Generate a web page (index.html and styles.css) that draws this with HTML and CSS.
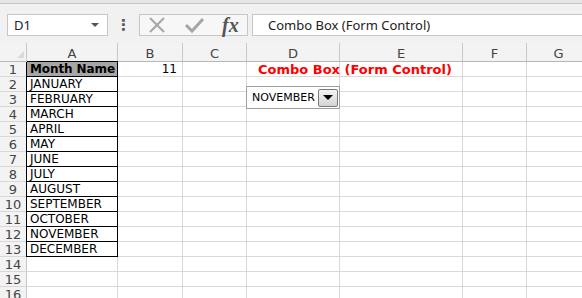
FILE: index.html
```html
<!DOCTYPE html>
<html lang="en">
<head>
    <meta charset="UTF-8">
    <title>Combo Box</title>
    <link rel="stylesheet" href="styles.css">
</head>
<body>
    <div class="topbar"></div>
    <div class="toolbar">
        <div class="namebox">
            <span>D1</span>
            <span class="arrow"></span>
        </div>
        <div class="dots">&#8942;</div>
        <div class="fxbox">
            <svg width="18" height="18" viewBox="0 0 18 18"><path d="M2 2 L16 16 M16 2 L2 16" stroke="#a6a6a6" stroke-width="2" fill="none"/></svg>
            <svg width="20" height="18" viewBox="0 0 20 18"><path d="M2 9 L8 15 L19 3" stroke="#a6a6a6" stroke-width="3" fill="none"/></svg>
            <span class="fx">fx</span>
        </div>
        <div class="formula">Combo Box (Form Control)</div>
    </div>

    <div class="sheet">
        <div class="grid head">
            <div class="corner"><span class="tri"></span></div>
            <div class="colhead">A</div>
            <div class="colhead">B</div>
            <div class="colhead">C</div>
            <div class="colhead">D</div>
            <div class="colhead">E</div>
            <div class="colhead">F</div>
            <div class="colhead">G</div>
        </div>
        <div class="grid" id="rows"></div>

        <div class="combo">
            <span>NOVEMBER</span>
            <span class="combo-btn"><span class="combo-tri"></span></span>
        </div>
    </div>

    <script>
        const months = ['JANUARY', 'FEBRUARY', 'MARCH', 'APRIL', 'MAY', 'JUNE', 'JULY',
            'AUGUST', 'SEPTEMBER', 'OCTOBER', 'NOVEMBER', 'DECEMBER'];
        const rows = document.getElementById('rows');
        const empty = '<div class="cell"></div>';
        let html = '';
        for (let r = 1; r <= 16; r++) {
            html += '<div class="rowhead">' + r + '</div>';
            if (r === 1) {
                html += '<div class="cell month first">Month Name</div>';
                html += '<div class="cell num">11</div>';
                html += empty;
                html += '<div class="cell title"><span>Combo Box (Form Control)</span></div>';
            } else if (r <= 13) {
                html += '<div class="cell month">' + months[r - 2] + '</div>';
                html += empty + empty + empty;
            } else {
                html += empty + empty + empty + empty;
            }
            html += empty + empty + empty;
        }
        rows.innerHTML = html;
    </script>
</body>
</html>
```

FILE: styles.css
```css
body {
    margin: 0;
    width: 582px;
    height: 298px;
    overflow: hidden;
    background: #fff;
    font-family: "DejaVu Sans", sans-serif;
}
.topbar {
    height: 3px;
    background: #e6e6e6;
    border-bottom: 1px solid #c6c6c6;
}
.toolbar {
    height: 39px;
    background: #f1f1f1;
    display: flex;
    align-items: flex-start;
    padding: 10px 0 0 7px;
    box-sizing: border-box;
}
.namebox {
    width: 101px;
    height: 22px;
    box-sizing: border-box;
    background: #fff;
    border: 1px solid #c6c6c6;
    display: flex;
    align-items: center;
    justify-content: space-between;
    padding: 0 8px 0 6px;
    font-family: "Noto Sans", sans-serif;
    font-size: 13px;
    color: #222;
}
.arrow {
    width: 0;
    height: 0;
    border-left: 4px solid transparent;
    border-right: 4px solid transparent;
    border-top: 4px solid #555;
}
.dots {
    width: 31px;
    text-align: center;
    font-size: 15px;
    line-height: 22px;
    color: #555;
    font-weight: bold;
}
.fxbox {
    width: 109px;
    height: 22px;
    box-sizing: border-box;
    background: #f7f7f7;
    border: 1px solid #c6c6c6;
    display: flex;
    align-items: center;
    gap: 18px;
    padding-left: 8px;
}
.fx {
    font-family: "Liberation Serif", serif;
    font-style: italic;
    font-weight: bold;
    font-size: 20px;
    color: #555;
    line-height: 20px;
}
.formula {
    margin-left: 4px;
    flex: 1;
    height: 22px;
    box-sizing: border-box;
    background: #fff;
    border: 1px solid #c6c6c6;
    border-right: none;
    padding-left: 15px;
    font-family: "Noto Sans", sans-serif;
    font-size: 13px;
    line-height: 20px;
    color: #222;
}
.sheet {
    position: relative;
}
.grid {
    display: grid;
    grid-template-columns: 27px 91px 65px 64px 93px 123px 64px 64px;
    grid-auto-rows: 15px;
}
.grid.head {
    grid-auto-rows: 19px;
}
.corner,
.colhead {
    box-sizing: border-box;
    background: #f3f3f3;
    border-right: 1px solid #c8c8c8;
    border-bottom: 1px solid #b8b8b8;
}
.corner {
    position: relative;
}
.tri {
    position: absolute;
    right: 2px;
    bottom: 3px;
    width: 0;
    height: 0;
    border-left: 7px solid transparent;
    border-bottom: 7px solid #dadada;
}
.colhead {
    text-align: center;
    font-size: 13px;
    line-height: 21px;
    color: #444;
}
.rowhead {
    box-sizing: border-box;
    background: #f3f3f3;
    border-right: 1px solid #c8c8c8;
    border-bottom: 1px solid #d8d8d8;
    text-align: center;
    font-size: 13px;
    line-height: 16px;
    color: #444;
}
.cell {
    box-sizing: border-box;
    border-right: 1px solid #d9d9d9;
    border-bottom: 1px solid #d9d9d9;
    font-size: 12px;
    line-height: 15px;
    color: #000;
    white-space: nowrap;
}
.month {
    border-right-color: #000;
    border-bottom-color: #000;
    box-shadow: -1px 0 0 #000;
    padding-left: 3px;
}
.month.first {
    background: #a6a6a6;
    font-weight: bold;
    box-shadow: -1px 0 0 #000, 0 -1px 0 #000, -1px -1px 0 #000;
    padding-left: 3px;
    letter-spacing: -0.1px;
}
.num {
    text-align: right;
    padding-right: 5px;
}
.title {
    position: relative;
    overflow: visible;
}
.title span {
    position: absolute;
    left: 11px;
    top: 0;
    font-weight: bold;
    font-size: 13px;
    color: #ff0000;
}
.combo {
    position: absolute;
    left: 246px;
    top: 43px;
    width: 94px;
    height: 23px;
    box-sizing: border-box;
    background: #fff;
    border: 1px solid #a0a0a0;
    display: flex;
    align-items: center;
    justify-content: space-between;
    padding: 0 1px 0 5px;
    font-size: 11px;
    color: #000;
}
.combo-btn {
    width: 20px;
    height: 18px;
    box-sizing: border-box;
    border: 1px solid #7a7a7a;
    border-radius: 2px;
    background: linear-gradient(#f4f4f4, #d4d4d4);
    display: flex;
    align-items: center;
    justify-content: center;
}
.combo-tri {
    width: 0;
    height: 0;
    border-left: 5px solid transparent;
    border-right: 5px solid transparent;
    border-top: 5px solid #000;
}
```
